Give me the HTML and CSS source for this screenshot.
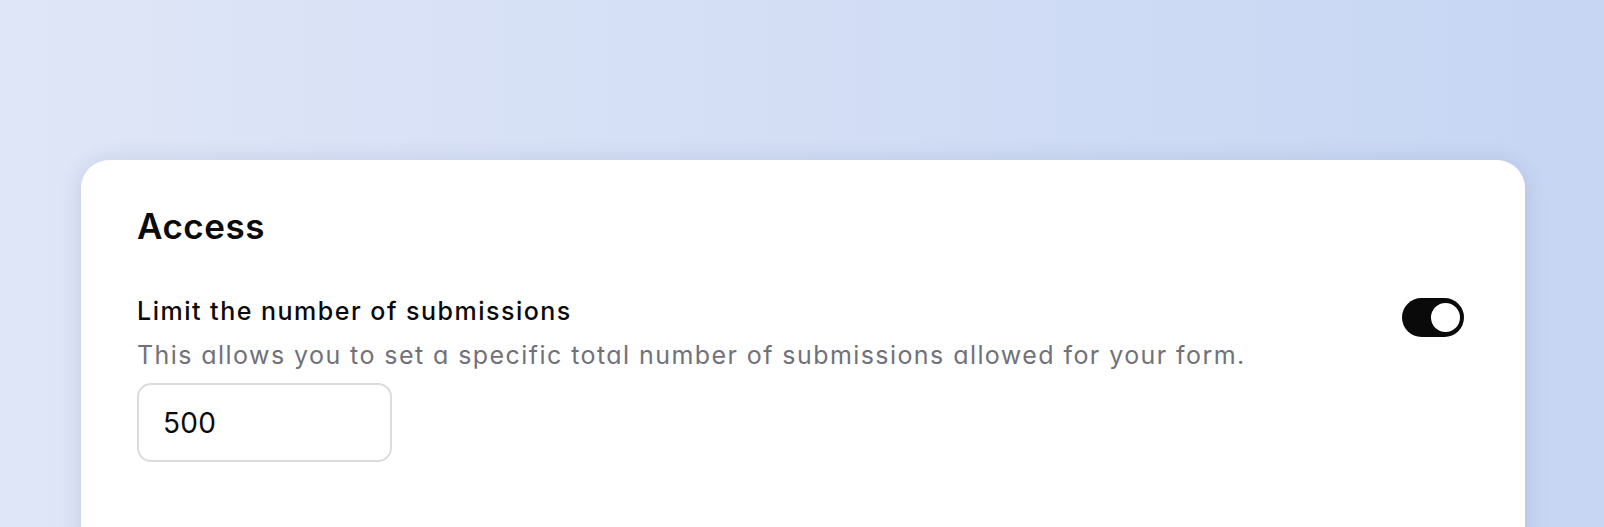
FILE: index.html
```html
<!DOCTYPE html>
<html lang="en">
<head>
<meta charset="utf-8">
<title>Access</title>
<link rel="stylesheet" href="styles.css">
</head>
<body>
<div class="page">
  <section class="card">
    <h2 class="title">Access</h2>
    <div class="setting">
      <div class="setting-text">
        <div class="label">Limit the number of submissions</div>
        <p class="desc">This allows you to set a specific total number of submissions allowed for your form.</p>
        <div class="input">500</div>
      </div>
      <div class="switch"><span class="knob"></span></div>
    </div>
  </section>
</div>
</body>
</html>
```

FILE: styles.css
```css
html, body {
  margin: 0;
  padding: 0;
  height: 100%;
  overflow: hidden;
}
body {
  font-family: Inter, "Noto Sans", sans-serif;
  font-feature-settings: "cv11" 1;
  background: linear-gradient(90deg, #dfe6f7 0%, #d3def5 50%, #c6d6f3 100%);
}
.page {
  padding: 160px 79px 0 81px;
}
.card {
  background: #fff;
  border-radius: 28px;
  box-shadow: 0 2px 22px rgba(50, 70, 130, 0.16);
  padding: 42px 61px 60px 56px;
  height: 500px;
  box-sizing: border-box;
}
.title {
  margin: 0;
  font-size: 35px;
  line-height: 49px;
  font-weight: 600;
  letter-spacing: 0.5px;
  color: #0a0a0a;
}
.setting {
  display: flex;
  justify-content: space-between;
  align-items: flex-start;
  margin-top: 43px;
}
.label {
  font-size: 25px;
  line-height: 35px;
  font-weight: 500;
  letter-spacing: 1.5px;
  color: #0a0a0a;
}
.desc {
  margin: 9px 0 0;
  font-size: 25px;
  line-height: 35px;
  letter-spacing: 1.43px;
  color: #71717a;
}
.input {
  margin-top: 10px;
  width: 255px;
  height: 79px;
  box-sizing: border-box;
  border: 2px solid #dcdce0;
  border-radius: 14px;
  padding-left: 24px;
  display: flex;
  align-items: center;
  font-size: 28px;
  letter-spacing: 0.3px;
  color: #0a0a0a;
}
.switch {
  margin-top: 4px;
  width: 62px;
  height: 39px;
  box-sizing: border-box;
  padding: 5px 4px;
  background: #0a0a0a;
  border-radius: 20px;
  display: flex;
  justify-content: flex-end;
}
.knob {
  width: 29px;
  height: 29px;
  border-radius: 50%;
  background: #fff;
}
```
